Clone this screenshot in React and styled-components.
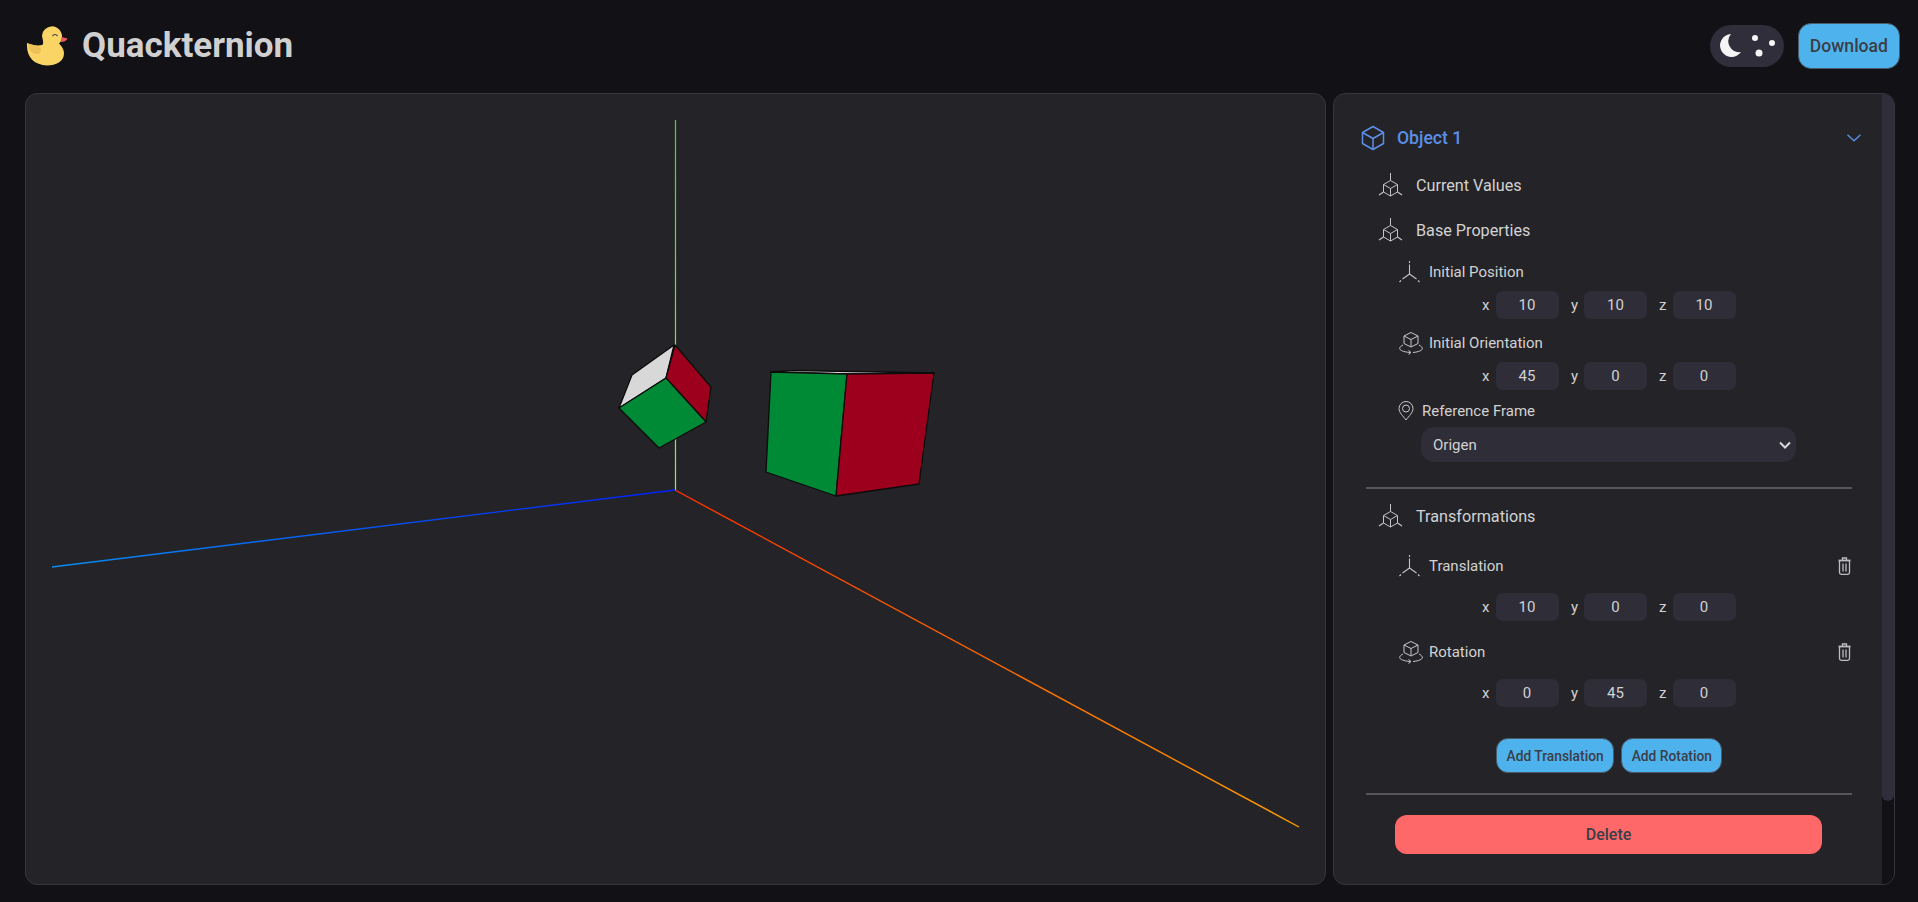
import React from "react";
import styled, { createGlobalStyle } from "styled-components";

const Global = createGlobalStyle`
  html, body { margin: 0; padding: 0; background: #111116; }
  body { font-family: Roboto, "Liberation Sans", sans-serif; color: #d2d2d2; }
  * { box-sizing: border-box; }
`;

const Page = styled.div`
  height: 100vh;
  display: flex;
  flex-direction: column;
  padding: 0 23px 17px 25px;
  overflow: hidden;
`;
const Header = styled.header`
  height: 93px;
  flex: none;
  display: flex;
  align-items: center;
  padding-bottom: 2px;
`;
const Brand = styled.div`
  display: flex;
  align-items: center;
  gap: 14px;
  margin-left: 1px;
`;
const Title = styled.h1`
  margin: 0;
  font-size: 35px;
  font-weight: 700;
  color: #d0d0d0;
`;
const Actions = styled.div`
  margin-left: auto;
  margin-right: -5px;
  display: flex;
  align-items: center;
  gap: 14px;
`;
const Toggle = styled.div`
  width: 74px;
  height: 42px;
  border-radius: 21px;
  background: #2f2e3a;
  display: flex;
`;
const Button = styled.button`
  border: 1px solid #4a5a68;
  background: #4eb3ec;
  color: #3b3e48;
  font-family: inherit;
  font-weight: 500;
  font-size: ${(p) => p.$size || 13.8}px;
  height: ${(p) => p.$h || 35}px;
  padding: 0 ${(p) => p.$pad || 9.5}px;
  border-radius: ${(p) => p.$r || 12}px;
`;
const Main = styled.main`
  flex: 1;
  min-height: 0;
  display: grid;
  grid-template-columns: 1fr 562px;
  gap: 7px;
`;
const ViewPanel = styled.section`
  background: #242428;
  border: 1px solid #35353c;
  border-radius: 12px;
  overflow: hidden;
`;
const Scene = styled.svg`
  display: block;
  width: 100%;
  height: 100%;
`;
const SidePanel = styled.aside`
  position: relative;
  background: #242428;
  border: 1px solid #35353c;
  border-radius: 12px;
  overflow: hidden;
  padding: 26px 42px 0 27px;
`;
const ScrollTrack = styled.div`
  position: absolute;
  top: 0;
  right: 0;
  bottom: 0;
  width: 12px;
  background: #111116;
`;
const ScrollThumb = styled.div`
  height: 707px;
  background: #2f2e3a;
  border-radius: 0 0 6px 6px;
`;
const ObjectHeader = styled.div`
  height: 36px;
  display: flex;
  align-items: center;
  gap: 12px;
  color: #5b8fe8;
  font-size: 17.6px;
  font-weight: 500;
`;
const Chevron = styled.div`
  margin-left: auto;
  margin-right: -9px;
  display: flex;
`;
const SectionRow = styled.div`
  height: 30px;
  margin-top: ${(p) => p.$top}px;
  margin-left: 17px;
  display: flex;
  align-items: center;
  gap: 13px;
  font-size: 16.2px;
`;
const SubRow = styled.div`
  height: 24px;
  margin-top: ${(p) => p.$top}px;
  margin-left: 37px;
  display: flex;
  align-items: center;
  gap: ${(p) => p.$gap || 8}px;
  font-size: 15px;
`;
const Trash = styled.div`
  margin-left: auto;
  margin-right: 1px;
  display: flex;
`;
const Coords = styled.div`
  margin-top: ${(p) => p.$top}px;
  margin-left: 109px;
  display: flex;
  align-items: center;
  font-size: 15px;
`;
const Axis = styled.label`
  width: 88.5px;
  display: flex;
  align-items: center;
  justify-content: flex-end;
  gap: 6px;
`;
const Num = styled.input`
  width: 63px;
  height: 28px;
  border: none;
  border-radius: 7px;
  background: #2e2d38;
  color: #d2d2d2;
  text-align: center;
  font-family: inherit;
  font-size: 15px;
  padding: 0;
  outline: none;
`;
const SelectWrap = styled.div`
  position: relative;
  width: 375px;
  margin: 4px 0 0 60px;
`;
const FrameSelect = styled.select`
  display: block;
  width: 100%;
  height: 35px;
  padding: 0 12px;
  appearance: none;
  background: #2e2d38;
  color: #d2d2d2;
  border: none;
  border-radius: 13px;
  font-family: inherit;
  font-size: 15px;
  outline: none;
`;
const SelectArrow = styled.svg`
  position: absolute;
  right: 5px;
  top: 14px;
  pointer-events: none;
`;
const Divider = styled.hr`
  margin: ${(p) => p.$top}px 0 0 5px;
  width: 486px;
  height: 2px;
  border: none;
  background: #55555a;
`;
const AddRow = styled.div`
  margin: 31px 0 0 135px;
  display: flex;
  gap: 7px;
`;
const DeleteButton = styled.button`
  display: block;
  margin: 20px 0 0 34px;
  width: 427px;
  height: 39px;
  border: none;
  border-radius: 12px;
  background: #ff6868;
  color: #3b3e48;
  font-family: inherit;
  font-size: 16px;
  font-weight: 500;
`;

const Duck = () => (
  <svg width="42" height="42" viewBox="0 0 42 42">
    <path d="M16 11a10 10 0 1 1 17 7.500c4 4 5 7 5 10 0 8-8 12-17 12C8 40 0 32 1 18c4 2 11 3 15 2 2-1 1-4 0-9z" fill="#fad566" />
    <path d="M1.500 18c4 2 10 2 13 5 2 4-1 6-4 6-5 0-8-5-9-11z" fill="#ecc258" />
    <path d="M35.500 12l6 1.500c-1 2-3 3.500-6.500 3.500z" fill="#ef5d5d" />
    <path d="M26.500 11q2.500-3 5 0" fill="none" stroke="#3d3a50" strokeWidth="1.200" />
  </svg>
);
const Moon = () => (
  <svg width="74" height="42" viewBox="0 0 74 42">
    <path d="M21 9A11.500 11.500 0 1 0 31 27 11 11 0 0 1 21 9z" fill="#f5f5f5" />
    <circle cx="45" cy="13" r="3" fill="#f5f5f5" />
    <circle cx="62" cy="18" r="3" fill="#f5f5f5" />
    <circle cx="49" cy="28" r="3.500" fill="#f5f5f5" />
  </svg>
);
const CubeIcon = () => (
  <svg width="24" height="26" viewBox="0 0 24 26" fill="none" stroke="#5b8fe8" strokeWidth="1.500" strokeLinejoin="round">
    <path d="M12 1.500 22.500 7.500v11L12 24.500 1.500 18.500v-11z" />
    <path d="M1.500 7.500 12 13.500 22.500 7.500M12 13.500v11" />
  </svg>
);
const AxisCube = () => (
  <svg width="25" height="24" viewBox="0 0 25 24" fill="none" stroke="#c4c4c4" strokeWidth="1" strokeLinejoin="round">
    <path d="M12.500 0v7.500" />
    <path d="M12.500 7.500l7 4v7.500l-7 4-7-4v-7.500z" />
    <path d="M5.500 11.500l7 4 7-4M12.500 15.500v7.500" />
    <path d="M5.500 19l-4.500 3M19.500 19l4.500 3" strokeWidth="1.200" />
  </svg>
);
const AxisIcon = () => (
  <svg width="23" height="22" viewBox="0 0 23 22" fill="none" stroke="#c4c4c4" strokeWidth="1.100">
    <path d="M11.500 0v2M11.500 3.500v9.500M11.500 13l-7 5M11.500 13l7 5M3 19.500l-1.500 1.500M20 19.500l1.500 1.500" />
  </svg>
);
const OrbitIcon = () => (
  <svg width="26" height="23" viewBox="0 0 26 23" fill="none" stroke="#c8c8c8" strokeWidth="1" strokeLinejoin="round">
    <path d="M13 0.500l7 3.500v7.500l-7 3.500-7-3.500V4z" />
    <path d="M6 4l7 3.500 7-3.500M13 7.500v7" />
    <path d="M5 13c-6 3-4 6.500 7 7.500M21 13c6 3 4 6.500-6 7.500" />
    <path d="M10.500 18.500l2.500 2-2.500 2" />
  </svg>
);
const PinIcon = () => (
  <svg width="16" height="20" viewBox="0 0 16 20" fill="none" stroke="#c8c8c8" strokeWidth="1">
    <path d="M8 19C5 15 1 11.500 1 7.500a7 7 0 0 1 14 0C15 11.500 11 15 8 19z" />
    <circle cx="8" cy="7.500" r="3.500" />
  </svg>
);
const TrashIcon = () => (
  <svg width="13" height="18" viewBox="0 0 13 18" fill="none" stroke="#bdbdbd" strokeWidth="1.300">
    <path d="M0.500 3.500h12" strokeWidth="1.800" />
    <path d="M4.500 3v-2h4v2" />
    <path d="M1.500 4v11.500q0 1.800 1.800 1.800h6.400q1.800 0 1.800-1.800V4" />
    <path d="M5 6.500v8M8 6.500v8" />
  </svg>
);
const ChevronIcon = () => (
  <svg width="14" height="8" viewBox="0 0 14 8" fill="none" stroke="#5b8fe8" strokeWidth="1.300">
    <path d="M0.500 0.800 7 6.800 13.500 0.800" />
  </svg>
);

const CoordRow = ({ top, x, y, z }) => (
  <Coords $top={top}>
    <Axis>x<Num readOnly value={x} /></Axis>
    <Axis>y<Num readOnly value={y} /></Axis>
    <Axis>z<Num readOnly value={z} /></Axis>
  </Coords>
);

const Face = ({ points, fill }) => (
  <polygon points={points} fill={fill} stroke="#0c0c0c" strokeWidth="1.300" strokeLinejoin="round" />
);

const GREEN = "#008a36";
const RED = "#9c001c";
const WHITE = "#d8d8d8";

export default function App() {
  return (
    <Page>
      <Global />
      <Header>
        <Brand>
          <Duck />
          <Title>Quackternion</Title>
        </Brand>
        <Actions>
          <Toggle><Moon /></Toggle>
          <Button $size={17.6} $h={46} $pad={11} $r={13}>Download</Button>
        </Actions>
      </Header>
      <Main>
        <ViewPanel>
          <Scene viewBox="26 94 1299 790">
            <defs>
              <linearGradient id="ax" gradientUnits="userSpaceOnUse" x1="675" y1="490" x2="1299" y2="827">
                <stop offset="0" stopColor="#ff3000" />
                <stop offset="1" stopColor="#ff9c00" />
              </linearGradient>
              <linearGradient id="az" gradientUnits="userSpaceOnUse" x1="675" y1="490" x2="52" y2="567">
                <stop offset="0" stopColor="#0020ff" />
                <stop offset="1" stopColor="#0a8cf0" />
              </linearGradient>
              <linearGradient id="ay" gradientUnits="userSpaceOnUse" x1="675" y1="490" x2="675" y2="120">
                <stop offset="0" stopColor="#80ff30" />
                <stop offset="1" stopColor="#38e020" />
              </linearGradient>
            </defs>
            <line x1="675.500" y1="120" x2="675.500" y2="490" stroke="url(#ay)" strokeWidth="1.200" />
            <line x1="52" y1="567" x2="675" y2="490" stroke="url(#az)" strokeWidth="1.400" />
            <line x1="675" y1="490" x2="1299" y2="827" stroke="url(#ax)" strokeWidth="1.400" />
            <Face points="674,345 632,375 619,408 666,378" fill={WHITE} />
            <Face points="675,345 711,387 706,422 666,378" fill={RED} />
            <Face points="666,378 706,422 659,448 619,408" fill={GREEN} />
            <Face points="771,372 795,370.500 934,373 847,374" fill={WHITE} />
            <Face points="771,372 847,374 836,496 766,472" fill={GREEN} />
            <Face points="847,374 934,373 919,484 836,496" fill={RED} />
          </Scene>
        </ViewPanel>
        <SidePanel>
          <ObjectHeader>
            <CubeIcon />
            Object 1
            <Chevron><ChevronIcon /></Chevron>
          </ObjectHeader>
          <SectionRow $top={14}><AxisCube />Current Values</SectionRow>
          <SectionRow $top={15}><AxisCube />Base Properties</SectionRow>
          <SubRow $top={15}><AxisIcon />Initial Position</SubRow>
          <CoordRow top={7} x="10" y="10" z="10" />
          <SubRow $top={12} $gap={5}><OrbitIcon />Initial Orientation</SubRow>
          <CoordRow top={7} x="45" y="0" z="0" />
          <SubRow $top={9}><PinIcon />Reference Frame</SubRow>
          <SelectWrap>
            <FrameSelect defaultValue="Origen">
              <option>Origen</option>
            </FrameSelect>
            <SelectArrow width="12" height="8" viewBox="0 0 12 8" fill="none" stroke="#d8d8d8" strokeWidth="2">
              <path d="M1 1.500 6 6.500 11 1.500" />
            </SelectArrow>
          </SelectWrap>
          <Divider $top={25} />
          <SectionRow $top={12}><AxisCube />Transformations</SectionRow>
          <SubRow $top={23}>
            <AxisIcon />Translation
            <Trash><TrashIcon /></Trash>
          </SubRow>
          <CoordRow top={15} x="10" y="0" z="0" />
          <SubRow $top={19} $gap={5}>
            <OrbitIcon />Rotation
            <Trash><TrashIcon /></Trash>
          </SubRow>
          <CoordRow top={15} x="0" y="45" z="0" />
          <AddRow>
            <Button>Add Translation</Button>
            <Button>Add Rotation</Button>
          </AddRow>
          <Divider $top={20} />
          <DeleteButton>Delete</DeleteButton>
          <ScrollTrack><ScrollThumb /></ScrollTrack>
        </SidePanel>
      </Main>
    </Page>
  );
}
